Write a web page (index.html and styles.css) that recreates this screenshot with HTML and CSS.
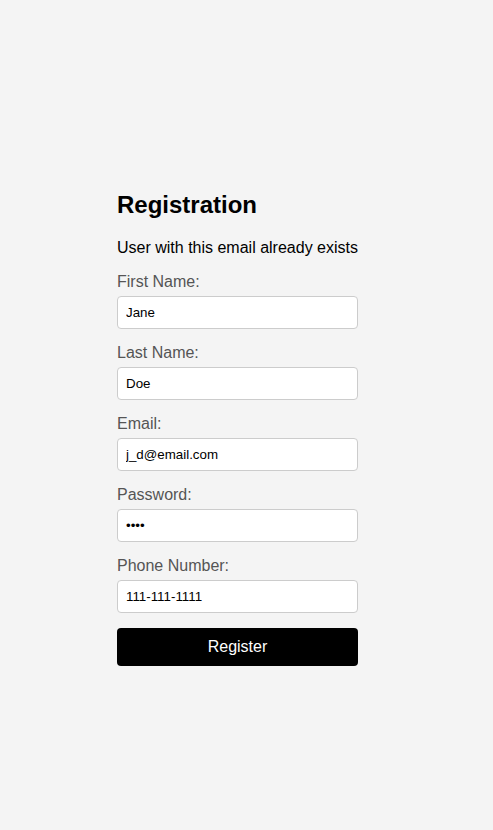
FILE: index.html
```html
<!DOCTYPE html>
<html>
<head>
<meta charset="utf-8">
<link rel="stylesheet" href="styles.css">
</head>
<body>
<div class="container">
  <h2 class="title">Registration</h2>
  <p class="message">User with this email already exists</p>
  <form class="form">
    <label class="label">First Name:</label>
    <input class="input" type="text" value="Jane">
    <label class="label">Last Name:</label>
    <input class="input" type="text" value="Doe">
    <label class="label">Email:</label>
    <input class="input" type="email" value="j_d@email.com">
    <label class="label">Password:</label>
    <input class="input" type="password" value="abcd">
    <label class="label">Phone Number:</label>
    <input class="input" type="text" value="111-111-1111">
    <button class="button" type="button">Register</button>
  </form>
</div>
</body>
</html>
```

FILE: styles.css
```css
html, body {
  margin: 0;
  padding: 0;
}
body {
  background: #f4f4f4;
  font-family: "Liberation Sans", Arial, sans-serif;
  min-height: 100vh;
  padding: 191px 0 0 117px;
  box-sizing: border-box;
}
.container {
  width: 241px;
}
.title {
  font-size: 24px;
  font-weight: bold;
  margin: 0 0 20px;
  color: #000;
}
.message {
  font-size: 16px;
  margin: 0 0 16px;
  color: #000;
}
.form {
  display: flex;
  flex-direction: column;
}
.label {
  display: block;
  font-size: 16px;
  line-height: 18px;
  color: #555;
  margin-bottom: 5px;
}
.input {
  box-sizing: border-box;
  height: 33px;
  width: 100%;
  border: 1px solid #ccc;
  border-radius: 4px;
  background: #fff;
  padding: 0 8px;
  font-family: "Liberation Sans", Arial, sans-serif;
  font-size: 13.333px;
  color: #000;
  margin: 0 0 15px;
  outline: none;
}
.button {
  box-sizing: border-box;
  height: 38px;
  width: 100%;
  margin-top: 0;
  border: none;
  border-radius: 4px;
  background: #000;
  color: #fff;
  font-family: "Liberation Sans", Arial, sans-serif;
  font-size: 16px;
  cursor: pointer;
}
```
